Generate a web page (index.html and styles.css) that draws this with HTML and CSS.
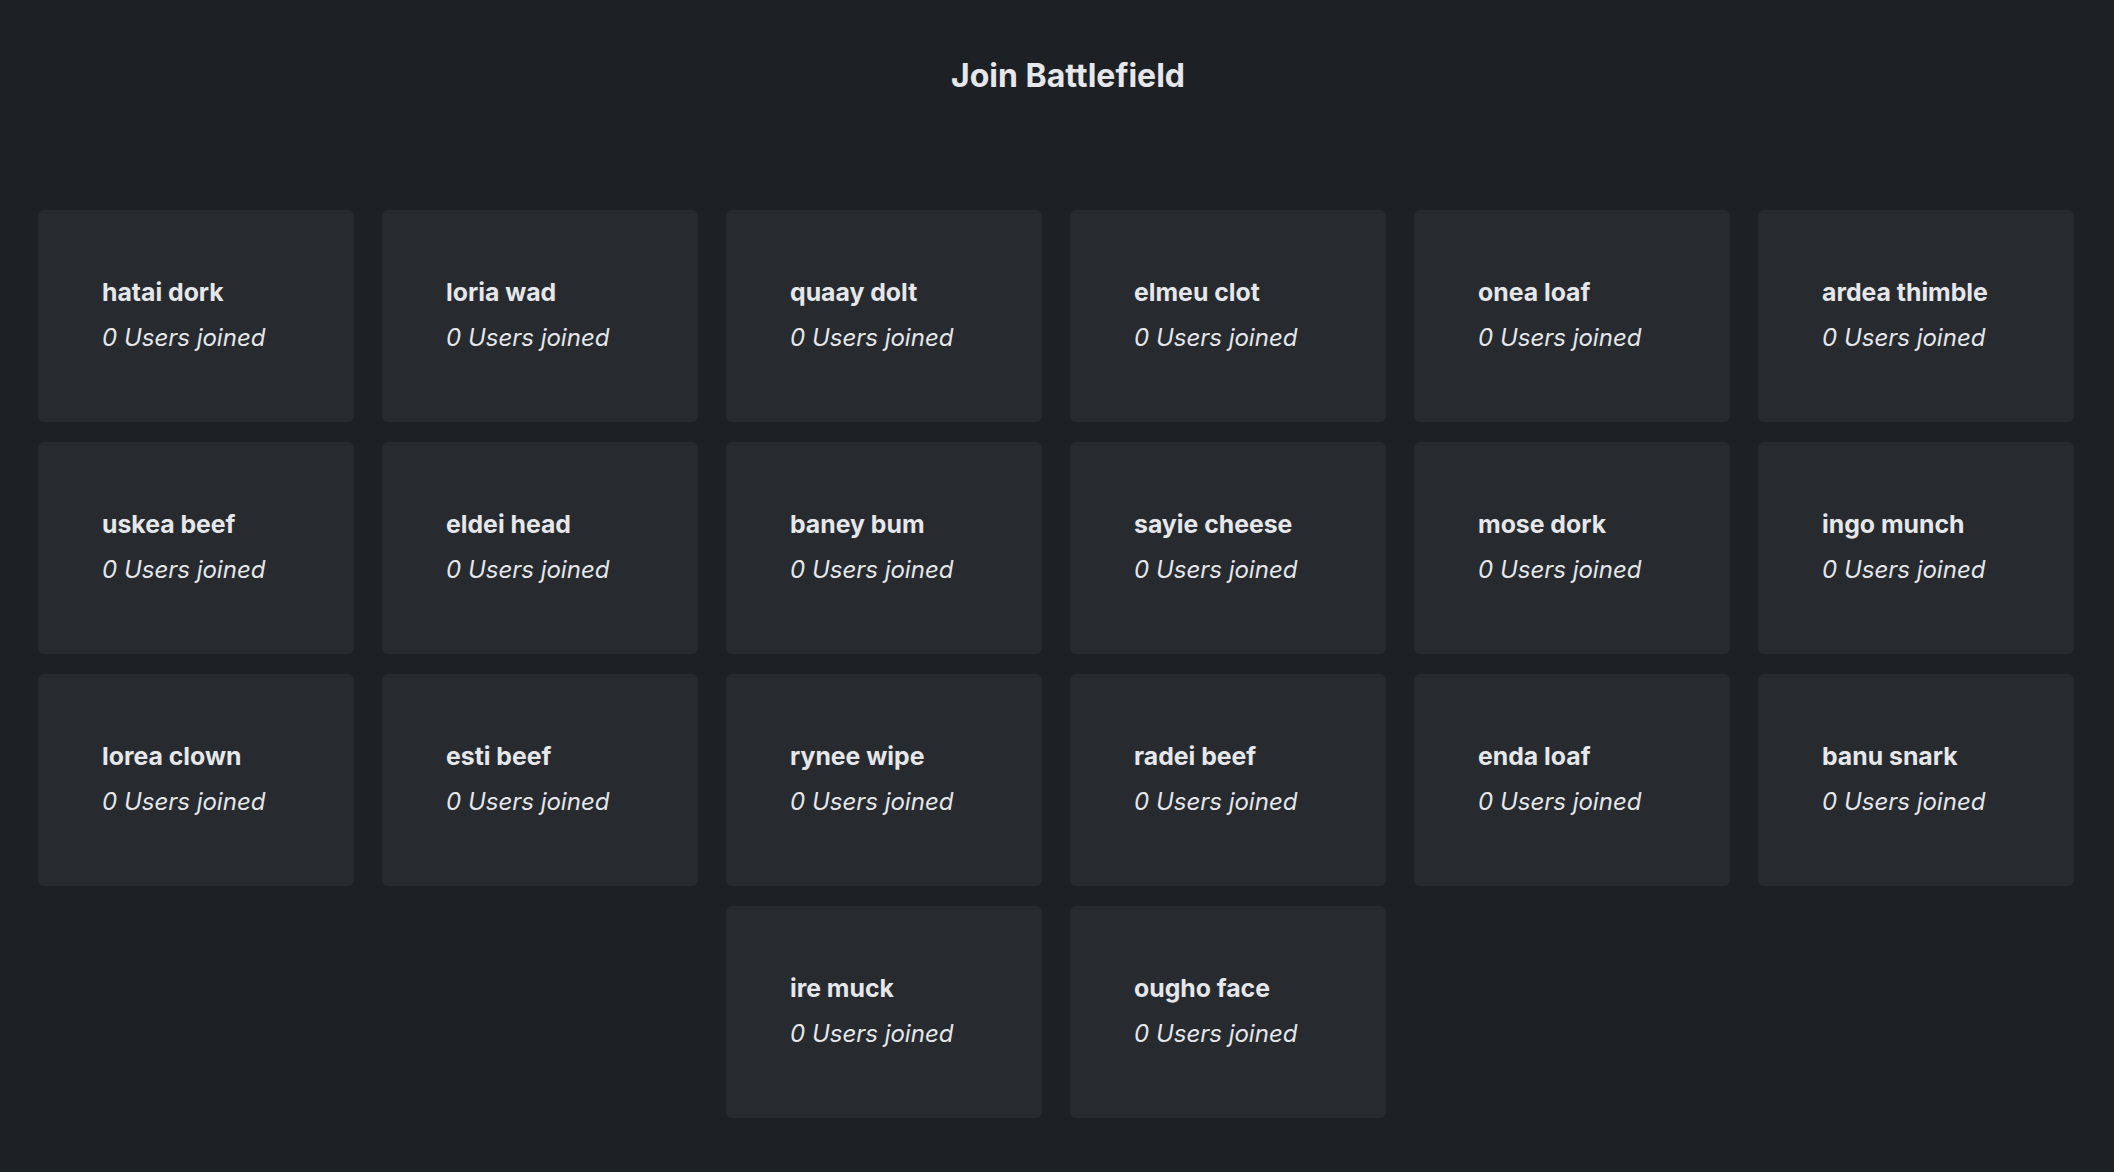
FILE: index.html
```html
<!DOCTYPE html>
<html lang="en">
<head>
<meta charset="utf-8">
<title>Join Battlefield</title>
<link rel="stylesheet" href="styles.css">
</head>
<body>
<main class="page">
  <h1 class="title">Join Battlefield</h1>
  <section class="grid">
    <div class="card"><div class="name">hatai dork</div><div class="count">0 Users joined</div></div>
    <div class="card"><div class="name">loria wad</div><div class="count">0 Users joined</div></div>
    <div class="card"><div class="name">quaay dolt</div><div class="count">0 Users joined</div></div>
    <div class="card"><div class="name">elmeu clot</div><div class="count">0 Users joined</div></div>
    <div class="card"><div class="name">onea loaf</div><div class="count">0 Users joined</div></div>
    <div class="card"><div class="name">ardea thimble</div><div class="count">0 Users joined</div></div>
    <div class="card"><div class="name">uskea beef</div><div class="count">0 Users joined</div></div>
    <div class="card"><div class="name">eldei head</div><div class="count">0 Users joined</div></div>
    <div class="card"><div class="name">baney bum</div><div class="count">0 Users joined</div></div>
    <div class="card"><div class="name">sayie cheese</div><div class="count">0 Users joined</div></div>
    <div class="card"><div class="name">mose dork</div><div class="count">0 Users joined</div></div>
    <div class="card"><div class="name">ingo munch</div><div class="count">0 Users joined</div></div>
    <div class="card"><div class="name">lorea clown</div><div class="count">0 Users joined</div></div>
    <div class="card"><div class="name">esti beef</div><div class="count">0 Users joined</div></div>
    <div class="card"><div class="name">rynee wipe</div><div class="count">0 Users joined</div></div>
    <div class="card"><div class="name">radei beef</div><div class="count">0 Users joined</div></div>
    <div class="card"><div class="name">enda loaf</div><div class="count">0 Users joined</div></div>
    <div class="card"><div class="name">banu snark</div><div class="count">0 Users joined</div></div>
    <div class="card"><div class="name">ire muck</div><div class="count">0 Users joined</div></div>
    <div class="card"><div class="name">ougho face</div><div class="count">0 Users joined</div></div>
  </section>
</main>
</body>
</html>
```
FILE: styles.css
```css
html, body {
  margin: 0;
  padding: 0;
  background: #1d2024;
}
body {
  font-family: Inter, "Noto Sans", sans-serif;
  color: #e5e7ea;
}
.page {
  display: flex;
  flex-direction: column;
  align-items: center;
  padding-top: 56px;
  padding-right: 2px;
}
.title {
  margin: 0 0 0 24px;
  font-size: 32px;
  line-height: 40px;
  font-weight: 700;
  color: #e5e7ea;
}
.grid {
  margin-top: 114px;
  width: 2036px;
  display: flex;
  flex-wrap: wrap;
  justify-content: center;
  gap: 20px 28px;
}
.card {
  box-sizing: border-box;
  width: 316px;
  height: 212px;
  padding: 64px 64px 0;
  background: #272b2f;
  border-radius: 6px;
  display: flex;
  flex-direction: column;
}
.name {
  font-size: 24.8px;
  line-height: 36px;
  font-weight: 700;
}
.count {
  margin-top: 10px;
  font-size: 24px;
  line-height: 36px;
  font-style: italic;
}
```
